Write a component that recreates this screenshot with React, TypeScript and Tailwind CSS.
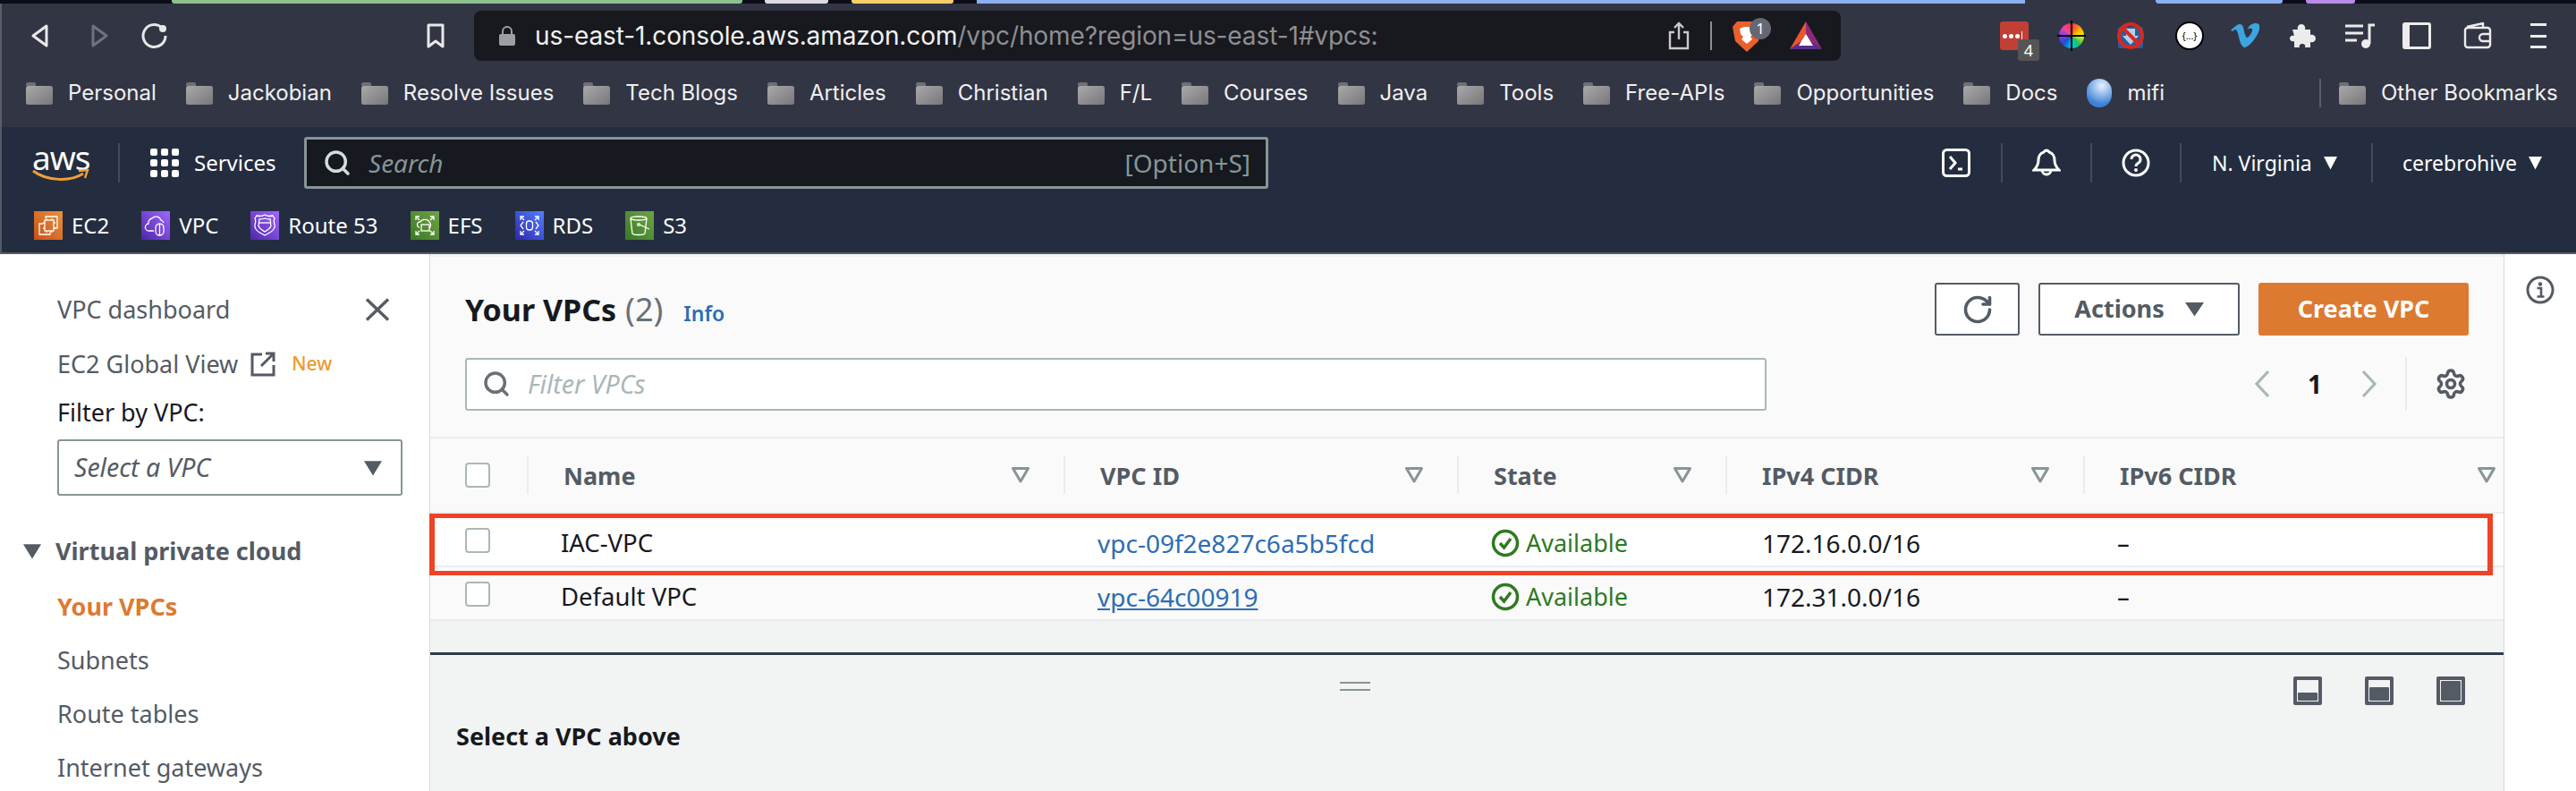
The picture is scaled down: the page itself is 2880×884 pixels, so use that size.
import React from 'react';
import { Settings, Search, RotateCw } from 'lucide-react';

const bookmarks = ['Personal', 'Jackobian', 'Resolve Issues', 'Tech Blogs', 'Articles', 'Christian', 'F/L', 'Courses', 'Java', 'Tools', 'Free-APIs', 'Opportunities', 'Docs'];

function Folder() {
  return (
    <svg width="30" height="26" viewBox="0 0 30 26" className="shrink-0">
      <defs>
        <linearGradient id="fold" x1="0" y1="0" x2="1" y2="1">
          <stop offset="0" stopColor="#a9a9ab" />
          <stop offset="1" stopColor="#77777a" />
        </linearGradient>
      </defs>
      <path d="M0 3a2 2 0 0 1 2-2h7a2 2 0 0 1 2 2v2H0z" fill="#6f7075" />
      <rect x="0" y="5" width="30" height="21" rx="2.5" fill="url(#fold)" />
    </svg>
  );
}

function Caret({ className, w = 15, h = 16 }: { className: string; w?: number; h?: number }) {
  return (
    <svg width={w} height={h} viewBox="0 0 15 16" preserveAspectRatio="none" className={className}>
      <path d="M0 1h15L7.5 15.5z" fill="currentColor" />
    </svg>
  );
}

function FilterIcon() {
  return (
    <svg width="20" height="18" viewBox="0 0 20 18" className="shrink-0">
      <path d="M1.5 1.5h17L10 16z" fill="none" stroke="#879596" strokeWidth="3" strokeLinejoin="round" />
    </svg>
  );
}

function Checkbox() {
  return <div className="w-[28px] h-[28px] rounded-[4px] border-2 border-[#aab7b8] bg-white" />;
}

function AvailableIcon() {
  return (
    <svg width="32" height="32" viewBox="0 0 32 32" className="shrink-0">
      <circle cx="16" cy="16" r="13.5" fill="none" stroke="#2f7a1f" strokeWidth="3.5" />
      <path d="M10 16l4.5 5L22 11" fill="none" stroke="#2f7a1f" strokeWidth="3.5" />
    </svg>
  );
}

function Tile({ from, to, children }: { from: string; to: string; children: React.ReactNode }) {
  return (
    <svg width="32" height="32" viewBox="0 0 32 32" className="shrink-0">
      <defs>
        <linearGradient id={from + to} x1="0" y1="1" x2="1" y2="0">
          <stop offset="0" stopColor={from} />
          <stop offset="1" stopColor={to} />
        </linearGradient>
      </defs>
      <rect width="32" height="32" fill={`url(#${from + to})`} />
      <g fill="none" stroke="#fff" strokeWidth="1.3">{children}</g>
    </svg>
  );
}

const services = [
  {
    name: 'EC2', from: '#c8511b', to: '#e8913a',
    icon: (<><path d="M13 8V6h13v13h-3" /><path d="M10 14H6v12h12v-4" /><rect x="12" y="10" width="10" height="12" /><path d="M14 8v2M20 8v2M14 22v2M20 22v2M10 13h2M10 19h2M22 13h2M22 19h2" /></>),
  },
  {
    name: 'VPC', from: '#4d27a8', to: '#a166ff',
    icon: (<><path d="M14 22H9a4 4 0 0 1-1-8 5 5 0 0 1 4-6 6 6 0 0 1 10 2 5 5 0 0 1 3 3" /><rect x="16" y="14" width="9" height="13" rx="4.5" /><path d="M20.5 14v13" /></>),
  },
  {
    name: 'Route 53', from: '#4d27a8', to: '#a166ff',
    icon: (<><path d="M16 4c3 2 5 2 9 1l2 3c-1 2-1 4 0 7 1 6-5 9-11 12C10 24 4 21 5 15c1-3 1-5 0-7l2-3c4 1 6 1 9-1z" /><path d="M16 8c2 1 4 1 6 1 1 3 0 5 1 7 0 3-4 5-7 7-3-2-7-4-7-7 1-2 0-4 1-7 2 0 4 0 6-1z" /><path d="M10 13h12" /></>),
  },
  {
    name: 'EFS', from: '#3a7a22', to: '#6fa348',
    icon: (<><path d="M6 10V6h4M22 6h4v4M6 22v4h4M22 26h4v-4M6 6l4 4M26 6l-4 4M6 26l4-4M26 26l-4-4" /><path d="M10 18a3 3 0 0 1 1-6c1-3 8-4 10 0 2 2 2 5 0 7" /><rect x="12" y="15" width="9" height="7" /></>),
  },
  {
    name: 'RDS', from: '#2e27ad', to: '#527fff',
    icon: (<><path d="M6 10V6h4M22 6h4v4M6 22v4h4M22 26h4v-4M6 6l4 4M26 6l-4 4M6 26l4-4M26 26l-4-4" /><rect x="12.5" y="11" width="7" height="10" rx="3" /><path d="M9 12l-3 4 3 4M23 12l3 4-3 4" /></>),
  },
  {
    name: 'S3', from: '#3a7a22', to: '#6fa348',
    icon: (<><ellipse cx="15" cy="8" rx="9" ry="2" /><path d="M6 8l2 17c1 2 13 2 14 0l2-17" /><circle cx="15" cy="15" r="1.3" /><path d="M16 15l11 5" /></>),
  },
];

function PanelIcon({ inner }: { inner: string }) {
  return (
    <div className="w-[32px] h-[32px] rounded-[2px] bg-[#545b64] p-[4px] flex flex-col justify-end">
      <div className="w-full h-full bg-[#f2f3f3] flex flex-col justify-end p-[1px]">
        <div className={`w-full rounded-[1px] bg-[#545b64] ${inner}`} />
      </div>
    </div>
  );
}

const cols = 'grid grid-cols-[108px_600px_440px_300px_400px_1fr]';

function HeaderCell({ label, last }: { label: string; last?: boolean }) {
  return (
    <div className={`h-[42px] border-l-2 border-[#eaeded] pl-[39px] flex items-center justify-between ${last ? 'pr-[9px]' : 'pr-[38px]'}`}>
      <span className="text-[27px] font-bold text-[#545b64] pt-[2px]">{label}</span>
      <FilterIcon />
    </div>
  );
}

function Row({ name, id, cidr, bg, underline }: { name: string; id: string; cidr: string; bg: string; underline?: boolean }) {
  return (
    <div className={`${cols} items-center h-[60px] pt-[8px] border-b-2 border-[#eaeded] text-[27.5px] text-[#16191f] ${bg}`}>
      <div className="pl-[39px] flex -translate-y-[3px]"><Checkbox /></div>
      <div className="pl-[38px]">{name}</div>
      <div className={`pl-[38px] text-[28px] text-[#2d6db5] ${underline ? 'underline' : ''}`}>{id}</div>
      <div className="pl-[38px] flex items-center gap-[7px] text-[27px] text-[#2f7a1f]"><AvailableIcon />Available</div>
      <div className="pl-[41px] text-[28px]">{cidr}</div>
      <div className="pl-[38px]">–</div>
    </div>
  );
}

export default function App() {
  return (
    <div className="relative w-[2880px] h-[884px] overflow-hidden bg-white font-['Noto_Sans','Open_Sans',sans-serif]">
      {/* tab strip */}
      <div className="h-[4px] flex bg-[#0d0d1a]">
        <div className="ml-[192px] w-[638px] bg-[#8cc08f] rounded-b-[3px]" />
        <div className="ml-[25px] w-[71px] bg-[#dcdce0] rounded-b-[3px]" />
        <div className="ml-[26px] w-[114px] bg-[#f6cf6b] rounded-b-[3px]" />
        <div className="ml-[26px] w-[1172px] bg-[#8aaeee]" />
        <div className="w-[146px] bg-[#323544]" />
        <div className="w-[142px] bg-[#8aaeee] rounded-b-[3px]" />
        <div className="ml-[26px] w-[55px] bg-[#b98ae8] rounded-b-[3px]" />
      </div>

      {/* browser toolbar */}
      <div className="h-[64px] bg-[#323544] border-l-2 border-[#5a5e68] flex items-center pt-[8px] pl-[32px] text-[#e8e8e8]">
        <svg width="22" height="28" viewBox="0 0 22 28"><path d="M18 3L3 14l15 11z" fill="none" stroke="#e8e8e8" strokeWidth="3" strokeLinejoin="round" /></svg>
        <svg width="22" height="28" viewBox="0 0 22 28" className="ml-[44px]"><path d="M4 3l15 11L4 25z" fill="none" stroke="#6f727e" strokeWidth="3" strokeLinejoin="round" /></svg>
        <svg width="30" height="30" viewBox="0 0 30 30" className="ml-[36px]">
          <path d="M22 5a12.5 12.5 0 1 0 5 10" fill="none" stroke="#e8e8e8" strokeWidth="3" />
          <circle cx="24" cy="7" r="4" fill="#e8e8e8" />
        </svg>
        <svg width="22" height="28" viewBox="0 0 22 28" className="ml-[288px]"><path d="M3 2h16v24l-8-6-8 6z" fill="none" stroke="#e8e8e8" strokeWidth="3" strokeLinejoin="round" /></svg>
        <div className="ml-[32px] w-[1528px] h-[56px] shrink-0 rounded-[8px] bg-[#18191e] flex items-center pl-[28px]">
          <svg width="18" height="22" viewBox="0 0 18 22" className="shrink-0"><rect y="9" width="18" height="13" rx="2" fill="#9b9ea3" /><path d="M4 10V6a5 5 0 0 1 10 0v4" fill="none" stroke="#9b9ea3" strokeWidth="2" /></svg>
          <div className="ml-[22px] w-[1240px] shrink-0 text-[28px] font-['Inter',sans-serif] tracking-[-0.1px] whitespace-nowrap text-[#f2f2f2]">us-east-1.console.aws.amazon.com<span className="text-[#8d8f94]">/vpc/home?region=us-east-1#vpcs:</span></div>
          <svg width="24" height="32" viewBox="0 0 24 32" className="ml-[27px] shrink-0"><path d="M7 12H2v18h20V12h-5M12 20V2M7 7l5-5 5 5" fill="none" stroke="#c9c9cb" strokeWidth="2.4" /></svg>
          <div className="ml-[23px] w-[2px] h-[32px] shrink-0 bg-[#8d8f94]" />
          <div className="relative ml-[22px] w-[36px] h-[38px] shrink-0">
            <svg width="34" height="38" viewBox="0 0 34 38"><path d="M6 3h22l5 6-3 16-13 12L4 25 1 9z" fill="#e9602c" /><path d="M9 11l5-2h6l5 2-1 6-3 3 2 3-6 5-6-5 2-3-3-3z" fill="#fff" /></svg>
            <div className="absolute -top-[1px] left-[20px] w-[24px] h-[24px] rounded-full bg-[#656873] text-[17px] text-white flex items-center justify-center">1</div>
          </div>
          <svg width="38" height="34" viewBox="0 0 38 34" className="ml-[28px] shrink-0">
            <path d="M19 1L1 32l18-12z" fill="#e8562f" />
            <path d="M19 1l18 31-18-12z" fill="#8d2a78" />
            <path d="M1 32h36l-18-12z" fill="#5b2d8c" />
            <path d="M19 15l-8 13h16z" fill="#fff" />
          </svg>
        </div>
        {/* extensions */}
        <div className="ml-[178px] flex items-center">
          <div className="relative w-[32px] h-[32px] rounded-[3px] bg-[#c13f35] flex items-center gap-[2px] pl-[3px]">
            <span className="w-[5px] h-[5px] rounded-full bg-white" />
            <span className="w-[5px] h-[5px] rounded-full bg-white" />
            <span className="w-[5px] h-[5px] rounded-full bg-white" />
            <span className="w-[1px] h-[10px] bg-white" />
            <div className="absolute top-[20px] left-[20px] w-[24px] h-[24px] rounded-[3px] bg-[#555] text-[18px] text-white flex items-center justify-center">4</div>
          </div>
          <div className="relative ml-[34px] w-[28px] h-[28px] rounded-full bg-[conic-gradient(#ff2d55,#ff9f00,#ffee00,#22c55e,#00c8d7,#1d4ed8,#7c3aed,#ec4899,#ff2d55)]">
            <span className="absolute left-[-2px] top-[13px] w-[32px] h-[2px] bg-black" />
            <span className="absolute top-[-3px] left-[13px] h-[34px] w-[2px] bg-black" />
          </div>
          <svg width="32" height="32" viewBox="0 0 32 32" className="ml-[36px]">
            <rect x="2" y="6" width="28" height="24" rx="3" fill="#2c5d9c" />
            <path d="M11 8h10v8h4l-9 10-9-10h4z" fill="#b9cfe8" />
            <circle cx="16" cy="16" r="13" fill="none" stroke="#d9281e" strokeWidth="4" />
            <path d="M7 7l18 18" stroke="#d9281e" strokeWidth="4" />
          </svg>
          <div className="ml-[34px] w-[32px] h-[32px] rounded-full bg-white border-2 border-black text-[11px] text-black flex items-center justify-center">{'{…}'}</div>
          <svg width="32" height="28" viewBox="0 0 32 28" className="ml-[30px]"><path d="M0 8c3-3 7-7 10-7 4 0 4 4 5 8 1 4 2 7 3 7 2 0 7-7 6-9-1-2-4-1-5 0 1-5 5-7 9-7 4 0 5 3 4 7-1 5-9 18-16 20-4 0-6-7-7-12-1-4-2-8-4-8-1 0-3 2-3 2z" fill="#3ea4e0" /></svg>
          <svg width="30" height="28" viewBox="0 0 30 28" className="ml-[34px]"><path d="M3 7h6c-1-3 1-6 4-6s5 3 4 6h6v6c3-1 6 1 6 4s-3 5-6 4v6h-6c1-3-1-4-3-4s-4 1-3 4H5v-7c-3 1-5-1-5-3s2-4 5-3z" fill="#ececec" /></svg>
          <svg width="34" height="30" viewBox="0 0 34 30" className="ml-[32px]"><path d="M0 4h20M0 12h20M0 20h13" stroke="#ececec" strokeWidth="3" /><path d="M27 24V3h6" fill="none" stroke="#ececec" strokeWidth="3" /><circle cx="23" cy="24" r="5" fill="#ececec" /></svg>
          <div className="ml-[30px] w-[32px] h-[30px] rounded-[3px] border-[3px] border-[#ececec] border-l-[8px]" />
          <svg width="32" height="30" viewBox="0 0 32 30" className="ml-[36px]"><path d="M4 5l18-4v5M2 9a3 3 0 0 1 3-3h22a3 3 0 0 1 3 3v16a3 3 0 0 1-3 3H5a3 3 0 0 1-3-3zM30 13h-8a4 4 0 0 0 0 8h8" fill="none" stroke="#ececec" strokeWidth="2.4" /></svg>
          <div className="ml-[43px] w-[18px] h-[28px] flex flex-col justify-between">
            <span className="h-[3px] bg-[#ececec]" /><span className="h-[3px] bg-[#ececec]" /><span className="h-[3px] bg-[#ececec]" />
          </div>
        </div>
      </div>

      {/* bookmarks bar */}
      <div className="h-[74px] bg-[#323544] border-l-2 border-[#5a5e68] flex items-center pl-[27px] pb-[2px] text-[24px] text-[#f0f0f0] font-['Inter',sans-serif] whitespace-nowrap">
        {bookmarks.map((b) => (
          <div key={b} className="flex items-center gap-[17px] mr-[33px]">
            <Folder />
            <span>{b}</span>
          </div>
        ))}
        <div className="flex items-center gap-[17px]">
          <div className="w-[28px] h-[32px] rounded-full bg-[radial-gradient(circle_at_60%_25%,#e8f3ff,#3b82d6_70%)]" />
          <span>mifi</span>
        </div>
        <div className="ml-auto w-[287px] flex items-center">
          <div className="w-[2px] h-[32px] bg-[#5b5e69]" />
          <div className="ml-[20px] flex items-center gap-[17px]">
            <Folder />
            <span>Other Bookmarks</span>
          </div>
        </div>
      </div>

      {/* aws header */}
      <div className="h-[142px] bg-[#232d3f] border-l-2 border-b-2 border-[#545b64] text-white">
        <div className="h-[80px] pl-[34px] flex items-center text-[24px]">
          <div className="relative w-[60px] h-[40px] shrink-0">
            <span className="block text-[37px] leading-[30px] font-normal -tracking-[1px] -mt-[1px]">aws</span>
            <svg width="64" height="16" viewBox="0 0 64 16" className="absolute top-[27px] left-[0px]">
              <path d="M1 2c16 12 42 12 56 3" fill="none" stroke="#f19e38" strokeWidth="3" />
              <path d="M52 2l10-1-3 9" fill="none" stroke="#f19e38" strokeWidth="2.4" />
            </svg>
          </div>
          <div className="ml-[36px] w-[2px] h-[44px] bg-[#414b5c]" />
          <div className="ml-[34px] w-[32px] h-[32px] grid grid-cols-3 gap-[4px]">
            {Array.from({ length: 9 }).map((_, i) => <span key={i} className="rounded-[2px] bg-white" />)}
          </div>
          <span className="ml-[17px] w-[88px] whitespace-nowrap">Services</span>
          <div className="ml-[35px] w-[1078px] h-[58px] shrink-0 rounded-[3px] border-[3px] border-[#879596] bg-[#16191f] flex items-center pl-[18px] pr-[17px] text-[#879596]">
            <Search size={32} strokeWidth={2.6} className="text-[#d5dbdb]" />
            <span className="ml-[19px] italic text-[28px]">Search</span>
            <span className="ml-auto text-[28px]">[Option+S]</span>
          </div>
          <svg width="32" height="32" viewBox="0 0 32 32" className="ml-[753px] shrink-0"><rect x="1.5" y="1.5" width="29" height="29" rx="4" fill="none" stroke="#fff" strokeWidth="3" /><path d="M9 9l6 7-6 7M18 23h5" fill="none" stroke="#fff" strokeWidth="3" /></svg>
          <div className="ml-[34px] w-[2px] h-[44px] shrink-0 bg-[#414b5c]" />
          <svg width="32" height="32" viewBox="0 0 32 32" className="ml-[33px] shrink-0"><path d="M16 2a4 4 0 0 0-3 2c-4 1-6 5-6 9 0 5-2 8-5 11h28c-3-3-5-6-5-11 0-4-2-8-6-9a4 4 0 0 0-3-2zM11 24a5 5 0 0 0 10 0" fill="none" stroke="#fff" strokeWidth="3" /></svg>
          <div className="ml-[33px] w-[2px] h-[44px] shrink-0 bg-[#414b5c]" />
          <svg width="32" height="32" viewBox="0 0 32 32" className="ml-[33px] shrink-0"><circle cx="16" cy="16" r="14" fill="none" stroke="#fff" strokeWidth="3" /><path d="M11 12a5 5 0 1 1 8 4c-2 1-3 2-3 4" fill="none" stroke="#fff" strokeWidth="3" /><circle cx="16" cy="24" r="2" fill="#fff" /></svg>
          <div className="ml-[33px] w-[2px] h-[44px] shrink-0 bg-[#414b5c]" />
          <span className="ml-[34px] w-[112px] text-[23px] whitespace-nowrap">N. Virginia</span>
          <Caret className="ml-[13px] shrink-0 text-white" />
          <div className="ml-[38px] w-[2px] h-[44px] shrink-0 bg-[#414b5c]" />
          <span className="ml-[33px] w-[128px] text-[23px] whitespace-nowrap">cerebrohive</span>
          <Caret className="ml-[13px] shrink-0 text-white" />
        </div>
        <div className="pl-[36px] pt-[14px] flex items-start gap-[36px] text-[24px]">
          {services.map((s) => (
            <div key={s.name} className="flex items-center gap-[10px] h-[32px]">
              <Tile from={s.from} to={s.to}>{s.icon}</Tile>
              <span>{s.name}</span>
            </div>
          ))}
        </div>
      </div>

      {/* console body */}
      <div className="flex h-[600px]">
        <aside className="w-[481px] shrink-0 border-r border-[#d5dbdb] pl-[64px] pt-[44px] text-[27px] text-[#545b64]">
          <div className="h-[36px] flex items-center justify-between pr-[44px]">
            <span>VPC dashboard</span>
            <svg width="28" height="26" viewBox="0 0 28 26"><path d="M2 1.5l24 23M26 1.5l-24 23" fill="none" stroke="#545b64" strokeWidth="3.4" /></svg>
          </div>
          <div className="mt-[25px] h-[36px] flex items-center">
            <span>EC2 Global View</span>
            <svg width="28" height="28" viewBox="0 0 28 28" className="ml-[14px]"><path d="M13 3H2v23h24V15M17 2h9v9M26 2L12 16" fill="none" stroke="#545b64" strokeWidth="3" /></svg>
            <span className="ml-[18px] text-[21px] font-medium text-[#ec9a2f]">New</span>
          </div>
          <div className="mt-[18px] h-[36px] flex items-center text-[#16191f]">Filter by VPC:</div>
          <div className="mt-[12px] w-[386px] h-[63px] rounded-[3px] border-2 border-[#879596] bg-white flex items-center justify-between pl-[17px] pr-[21px]">
            <span className="italic text-[28.5px] text-[#545b64]">Select a VPC</span>
            <Caret w={20} h={18} className="text-[#545b64]" />
          </div>
          <div className="-ml-[38px] mt-[44px] h-[36px] flex items-center font-bold text-[#545b64]">
            <Caret w={20} h={18} className="text-[#545b64]" />
            <span className="ml-[16px]">Virtual private cloud</span>
          </div>
          <div className="mt-[26px] h-[36px] flex items-center font-bold text-[#dd7a32]">Your VPCs</div>
          <div className="mt-[24px] h-[36px] flex items-center">Subnets</div>
          <div className="mt-[24px] h-[36px] flex items-center">Route tables</div>
          <div className="mt-[24px] h-[36px] flex items-center">Internet gateways</div>
        </aside>

        <main className="w-[2318px] shrink-0 bg-[#f2f3f3] flex flex-col">
          <div className="h-[3px] bg-[#f2f3f3]" />
          <div className="h-[203px] bg-[#fafafa] border-b-2 border-[#eaeded] pl-[39px] pr-[39px] pt-[29px]">
            <div className="flex items-start">
              <div className="flex items-baseline mt-[8px]">
                <span className="text-[34px] leading-[44px] font-bold text-[#16191f]">Your VPCs</span>
                <span className="ml-[10px] text-[36px] leading-[44px] text-[#687078]">(2)</span>
                <span className="ml-[23px] text-[23px] font-semibold text-[#2d6db5]">Info</span>
              </div>
              <div className="ml-auto flex gap-[21px]">
                <div className="w-[95px] h-[59px] rounded-[3px] border-2 border-[#545b64] bg-white flex items-center justify-center">
                  <RotateCw size={36} strokeWidth={2.4} className="text-[#545b64]" />
                </div>
                <div className="w-[225px] h-[59px] rounded-[3px] border-2 border-[#545b64] bg-white flex items-center justify-center gap-[23px] text-[27px] font-bold text-[#545b64]">
                  Actions
                  <Caret w={21} h={17} className="text-[#545b64]" />
                </div>
                <div className="w-[235px] h-[59px] rounded-[3px] bg-[#dd7a32] flex items-center justify-center text-[27px] font-bold text-white">Create VPC</div>
              </div>
            </div>
            <div className="mt-[24px] flex items-center">
              <div className="w-[1455px] h-[59px] shrink-0 rounded-[3px] border-2 border-[#aab7b8] bg-white flex items-center pl-[17px]">
                <Search size={32} strokeWidth={2.6} className="text-[#687078]" />
                <span className="ml-[19px] italic text-[28.5px] text-[#aab7b8]">Filter VPCs</span>
              </div>
              <svg width="18" height="32" viewBox="0 0 18 32" className="ml-[545px] shrink-0"><path d="M16 2L3 16l13 14" fill="none" stroke="#aab7b8" strokeWidth="3.2" /></svg>
              <span className="ml-[33px] w-[34px] shrink-0 text-center text-[28px] font-bold text-[#16191f]">1</span>
              <svg width="18" height="32" viewBox="0 0 18 32" className="ml-[35px] shrink-0"><path d="M2 2l13 14L2 30" fill="none" stroke="#aab7b8" strokeWidth="3.2" /></svg>
              <div className="ml-[31px] w-[2px] h-[60px] shrink-0 bg-[#eaeded]" />
              <Settings size={36} strokeWidth={2.4} className="ml-[31px] shrink-0 text-[#545b64]" />
            </div>
          </div>

          {/* table */}
          <div className={`${cols} items-center h-[84px] bg-[#fafafa] border-b-2 border-[#eaeded]`}>
            <div className="pl-[39px]"><Checkbox /></div>
            <HeaderCell label="Name" />
            <HeaderCell label="VPC ID" />
            <HeaderCell label="State" />
            <HeaderCell label="IPv4 CIDR" />
            <HeaderCell label="IPv6 CIDR" last />
          </div>
          <Row name="IAC-VPC" id="vpc-09f2e827c6a5b5fcd" cidr="172.16.0.0/16" bg="bg-white" />
          <Row name="Default VPC" id="vpc-64c00919" cidr="172.31.0.0/16" bg="bg-[#fafafa]" underline />

          {/* split panel */}
          <div className="mt-[35px] flex-1 border-t-[3px] border-[#2f3b4a]">
            <div className="h-[67px] flex items-start">
              <div className="ml-[1017px] mt-[30px] w-[34px] h-[10px] border-y-2 border-[#879596]" />
              <div className="ml-[1032px] mt-[24px] flex gap-[48px]">
                <PanelIcon inner="h-[9px]" />
                <PanelIcon inner="h-[15px]" />
                <PanelIcon inner="h-full" />
              </div>
            </div>
            <div className="pl-[29px] mt-[4px] text-[27px] font-bold text-[#16191f]">Select a VPC above</div>
          </div>
        </main>

        <aside className="flex-1 border-l border-[#d5dbdb] pt-[24px] pl-[24px] bg-white">
          <svg width="32" height="32" viewBox="0 0 32 32"><circle cx="16" cy="16" r="14" fill="none" stroke="#545b64" strokeWidth="3" /><circle cx="16" cy="9.5" r="2.2" fill="#545b64" /><path d="M12.5 14H17v9M12.5 23.5h8" fill="none" stroke="#545b64" strokeWidth="2.6" /></svg>
        </aside>
      </div>

      {/* red annotation drawn over the screenshot */}
      <div className="absolute left-[480px] top-[574px] w-[2307px] h-[69px] border-x-[6px] border-y-[5px] border-[#ee4327]" />
    </div>
  );
}
